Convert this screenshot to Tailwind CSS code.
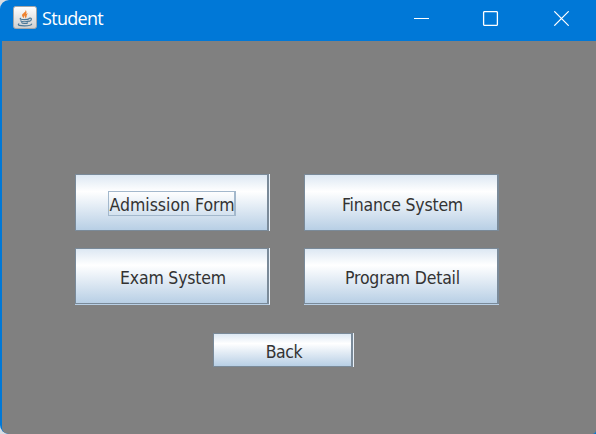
<!DOCTYPE html>
<html lang="en">
<head>
<meta charset="utf-8">
<title>Student</title>
<script src="https://cdn.jsdelivr.net/npm/@tailwindcss/browser@4"></script>
</head>
<body class="w-[596px] h-[434px] overflow-hidden bg-[#d8dde3]">
<div class="w-[596px] h-[434px] flex flex-col bg-[#0078d7] rounded-tl-[9px] rounded-bl-[9px] overflow-hidden">
  <header class="h-[41px] shrink-0 flex items-start text-white font-['Open_Sans',sans-serif]">
    <svg class="ml-[13px] mt-[6px] shrink-0" width="24" height="23" viewBox="0 0 24 23" fill="none">
      <defs><linearGradient id="tile" x1="0" y1="0" x2="0" y2="1"><stop stop-color="#fff"/><stop offset="1" stop-color="#cfcfcf"/></linearGradient></defs>
      <rect x=".5" y=".5" width="23" height="22" rx="2.2" fill="url(#tile)" stroke="#a5a7a8"/>
      <path d="M12.500 3.800c1.100 2.500-3.900 3.500-3.400 5.900.2.900 1.200 1.700 2 2.500-.3-1.800.2-2.500 1.200-3.400 1.400-1.300 1.700-3.200.2-5ZM14.900 7.200c-2.200.7-3.600 1.900-3.100 3.200.3.700.9 1 .4 2 2.200-1.300.5-2.400 2.700-5.200Z" fill="#ee8230"/>
      <path d="M7.500 12.300c-1.200.9 1.200 1.300 3.900 1.300s4.300-.3 4.700-.9M7.800 14.800c.8 1.200 5.700 1.200 7.500.3M8.600 16.700c.8 1.100 4.800 1 6 .2M16.200 12.300c3-.8 2.900 2.200-.2 3M5.800 17.900c-1.600 1.300 1 1.900 5.700 1.900 4.300 0 6.800-.5 7.100-1.700" stroke="#4b7898" stroke-width="1.200" stroke-linecap="round"/>
    </svg>
    <h1 class="ml-[5px] mt-[6px] text-[18px] leading-6 tracking-[-0.7px] w-[80px]">Student</h1>
    <svg class="ml-auto mr-[27px] mt-[11px]" width="155" height="15" viewBox="0 0 155 15" fill="none" stroke="#fff">
      <path d="M0 7.500h15"/><rect x="69.600" y=".6" width="13.800" height="13.800" rx="1" stroke-width="1.300"/><path d="m140.300.300 14.400 14.400m0-14.400-14.400 14.400" stroke-width="1.200"/>
    </svg>
  </header>
  <main class="ml-[2px] grow bg-[#808080] rounded-bl-[6px] rounded-br-[4px] pt-[133px] pl-[73px] font-['DejaVu_Sans_Condensed','DejaVu_Sans',sans-serif] text-[17.5px] leading-6 text-[#333]">
    <div class="grid grid-cols-[195px_195px] gap-x-[34px] gap-y-[17px] tracking-[-0.2px] [word-spacing:1px]">
      <button class="h-[57px] border-r border-[#e8f0f8]"><span class="flex w-full h-full justify-center items-center border border-r-2 border-[#7a8a99] bg-linear-to-b from-[#dde8f3] via-white via-30% to-[#b8cfe5]"><span class="w-[128px] h-[25px] mt-px border border-r-2 border-[#a3b8cc] flex items-center pl-px pt-[4px] whitespace-nowrap overflow-hidden tracking-[0px]">Admission Form</span></span></button>
      <button class="h-[57px] border border-r-2 border-[#7a8a99] bg-linear-to-b from-[#dde8f3] via-white via-30% to-[#b8cfe5] pt-[4px] pl-[3px]">Finance System</button>
      <button class="h-[57px] border-r border-b border-r-[#e8f0f8] border-b-[#b8cfe5]"><span class="flex w-full h-full justify-center items-center border border-r-2 border-[#7a8a99] bg-linear-to-b from-[#dde8f3] via-white via-30% to-[#b8cfe5] pt-[4px] pl-[3px]">Exam System</span></button>
      <button class="h-[57px] border-b border-[#b8cfe5]"><span class="flex w-full h-full justify-center items-center border border-r-2 border-[#7a8a99] bg-linear-to-b from-[#dde8f3] via-white via-30% to-[#b8cfe5] pt-[4px] pl-[3px]">Program Detail</span></button>
    </div>
    <button class="block ml-[138px] mt-[28px] w-[141px] h-[34px] border-r border-[#e8f0f8]"><span class="flex w-full h-full justify-center items-center border border-r-2 border-[#7a8a99] bg-linear-to-b from-[#dde8f3] via-white via-30% to-[#b8cfe5] pt-[3px] pl-[3px] tracking-[-0.4px]">Back</span></button>
  </main>
</div>
</body>
</html>
